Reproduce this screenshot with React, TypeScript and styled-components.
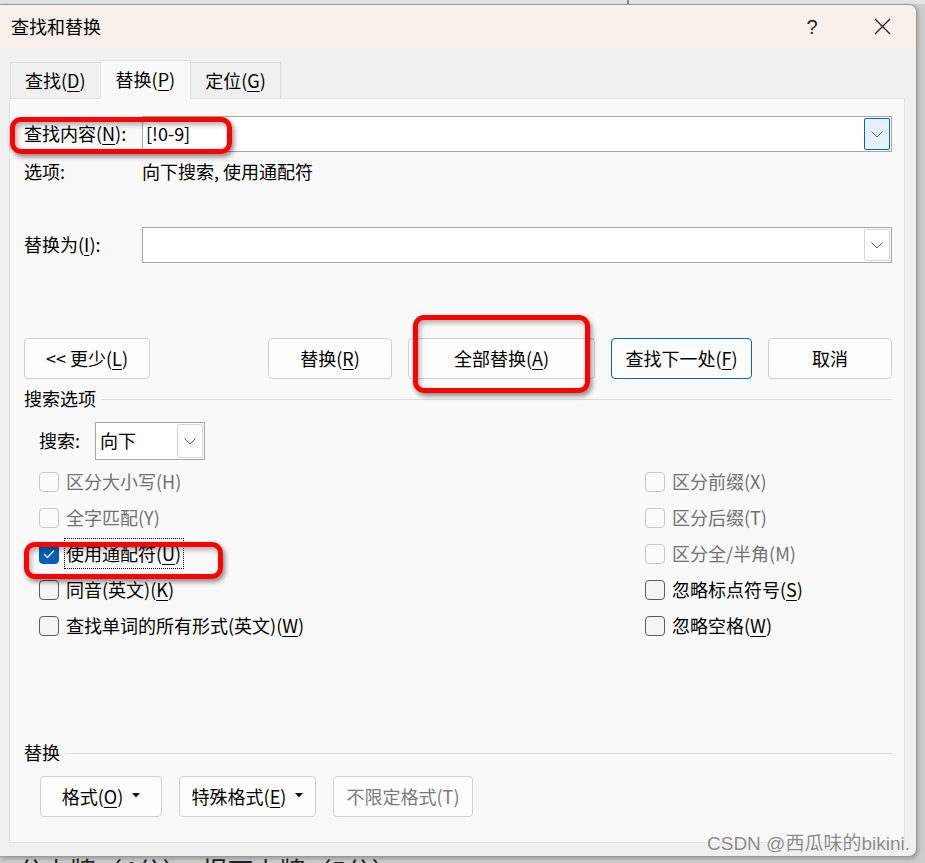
import React from "react";
import styled, { createGlobalStyle } from "styled-components";

const FONT = `"Noto Sans CJK SC", "Noto Sans", sans-serif`;

const Global = createGlobalStyle`
  html, body { margin: 0; padding: 0; }
  body { background: #cfcfcf; font-family: ${FONT}; color: #000; }
  u { text-underline-offset: 3px; text-decoration-thickness: 1px; }
`;

const Page = styled.div`
  position: relative;
  width: 925px;
  height: 863px;
  overflow: hidden;
  background: #cdcdcd;
`;

const TopStrip = styled.div`
  height: 4px;
  background: linear-gradient(to right, #e4e4e4 627px, #8c8c8c 627px, #8c8c8c 629px, #e4e4e4 629px);
`;

const Dialog = styled.div`
  position: relative;
  z-index: 1;
  width: 917px;
  height: 853px;
  box-sizing: border-box;
  border: 1px solid #999;
  border-left: none;
  border-radius: 0 8px 8px 0;
  background: #f0f0f0;
  display: flex;
  flex-direction: column;
  overflow: hidden;
  box-shadow: 1px 2px 4px rgba(0, 0, 0, 0.25);
`;

const TitleBar = styled.div`
  height: 43px;
  flex: none;
  background: #f9f0eb;
  display: flex;
  align-items: center;
  padding: 0 11px;
  font-size: 18px;
  line-height: 22px;
`;

const Title = styled.div`
  flex: 1;
  padding-bottom: 1px;
`;

const TitleButton = styled.div`
  width: 46px;
  height: 30px;
  display: flex;
  align-items: center;
  justify-content: center;
  font-family: "Liberation Sans", sans-serif;
  font-size: 20px;
  color: #222;
`;

const TitleButtons = styled.div`
  display: flex;
  gap: 24px;
`;

const Body = styled.div`
  flex: 1;
  display: flex;
  flex-direction: column;
  padding: 0 11px 0 9px;
`;

const TabStrip = styled.div`
  display: flex;
  align-items: flex-end;
  height: 50px;
  padding-left: 1px;
  position: relative;
  z-index: 1;
`;

const Tab = styled.div<{ $active?: boolean }>`
  box-sizing: border-box;
  height: ${(p) => (p.$active ? 39 : 37)}px;
  margin-bottom: -1px;
  padding: 0 ${(p) => (p.$active ? 15 : 14)}px 2px;
  display: flex;
  align-items: center;
  font-size: 18px;
  line-height: 22px;
  border: 1px solid ${(p) => (p.$active ? "#e3e3e3" : "#dddddd")};
  border-bottom: ${(p) => (p.$active ? "1px solid #f9f9f9" : "1px solid #e3e3e3")};
  background: ${(p) => (p.$active ? "#f9f9f9" : "#f0f0f0")};
  & + & {
    margin-left: -1px;
  }
`;

const Panel = styled.div`
  box-sizing: border-box;
  height: 745px;
  border: 1px solid #e3e3e3;
  background: #f9f9f9;
  padding: 17px 12px 0 14px;
  display: flex;
  flex-direction: column;
  font-size: 18px;
  line-height: 22px;
`;

const FieldRow = styled.div<{ $mt?: number }>`
  display: flex;
  align-items: center;
  height: 36px;
  margin-top: ${(p) => p.$mt ?? 0}px;
`;

const Label = styled.div`
  width: 118px;
  flex: none;
  padding-bottom: 2px;
`;

const Input = styled.div`
  flex: 1;
  height: 36px;
  box-sizing: border-box;
  border: 1px solid #a6a6a8;
  background: #fff;
  display: flex;
  align-items: center;
  padding-left: 3px;
`;

const InputText = styled.div`
  flex: 1;
  padding-bottom: 3px;
`;

const ComboButton = styled.div<{ $focused?: boolean; $h?: number }>`
  width: 26px;
  height: ${(p) => p.$h ?? 32}px;
  box-sizing: border-box;
  margin-right: 1px;
  border: 1px solid ${(p) => (p.$focused ? "#0067c0" : "#d6d6d6")};
  border-radius: 2px;
  background: ${(p) => (p.$focused ? "#e5f1fb" : "#fff")};
  display: flex;
  align-items: center;
  justify-content: center;
`;

const InfoRow = styled.div`
  display: flex;
  align-items: center;
  height: 40px;
`;

const ButtonRow = styled.div`
  display: flex;
  align-items: center;
  margin-top: 75px;
  gap: 16px;
`;

const Spacer = styled.div`
  flex: 1;
`;

const Button = styled.div<{ $w: number; $focused?: boolean; $disabled?: boolean }>`
  width: ${(p) => p.$w}px;
  height: 41px;
  box-sizing: border-box;
  border: 1px solid ${(p) => (p.$focused ? "#0067c0" : "#d0d0d0")};
  border-radius: 4px;
  background: #fdfdfd;
  display: flex;
  align-items: center;
  justify-content: center;
  gap: 9px;
  color: ${(p) => (p.$disabled ? "#7a7a7a" : "#000")};
  padding-bottom: 2px;
`;

const SectionHeading = styled.div<{ $mt: number }>`
  display: flex;
  align-items: center;
  gap: 5px;
  height: 22px;
  margin-top: ${(p) => p.$mt}px;
`;

const HeadingText = styled.span`
  padding-bottom: 2px;
`;

const Rule = styled.div`
  flex: 1;
  height: 1px;
  background: #dcdcdc;
`;

const SearchRow = styled.div`
  display: flex;
  align-items: center;
  margin-top: 12px;
  padding-left: 15px;
  gap: 15px;
`;

const Select = styled.div`
  width: 110px;
  height: 38px;
  box-sizing: border-box;
  border: 1px solid #a6a6a8;
  background: #fff;
  display: flex;
  align-items: center;
  padding-left: 4px;
`;

const CheckGrid = styled.div`
  display: grid;
  grid-template-columns: 606px 1fr;
  grid-auto-rows: 36px;
  margin-top: 4px;
  padding-left: 15px;
`;

const CheckItem = styled.div<{ $disabled?: boolean }>`
  display: flex;
  align-items: center;
  gap: 7px;
  color: ${(p) => (p.$disabled ? "#717171" : "#000")};
`;

const CheckText = styled.span`
  padding-bottom: 3px;
`;

const Box = styled.div<{ $checked?: boolean; $disabled?: boolean }>`
  width: 20px;
  height: 20px;
  box-sizing: border-box;
  border-radius: 4px;
  border: 1px solid
    ${(p) => (p.$checked ? "#005fb8" : p.$disabled ? "#c8c8c8" : "#5c5c5c")};
  background: ${(p) => (p.$checked ? "#005fb8" : p.$disabled ? "#fbfbfb" : "#f4f4f4")};
  display: flex;
  align-items: center;
  justify-content: center;
  flex: none;
`;

const FocusLabel = styled.span`
  outline: 1px dotted #000;
  outline-offset: 1px;
  padding: 0 1px 1px 0;
`;

const BottomButtons = styled.div`
  display: flex;
  align-items: center;
  gap: 17px;
  margin-top: 12px;
  padding-left: 16px;
`;

const DocLine = styled.div`
  margin-left: -8px;
  font-size: 26px;
  line-height: 26px;
  color: #222;
  white-space: nowrap;
`;

const Annotation = styled.div<{ $x: number; $y: number; $w: number; $h: number }>`
  position: absolute;
  z-index: 2;
  left: ${(p) => p.$x}px;
  top: ${(p) => p.$y}px;
  width: ${(p) => p.$w}px;
  height: ${(p) => p.$h}px;
  box-sizing: border-box;
  border: 5px solid #ff0000;
  border-radius: 11px;
  box-shadow: 2px 3px 5px rgba(0, 0, 0, 0.45), inset 2px 3px 5px rgba(0, 0, 0, 0.3);
  pointer-events: none;
`;

const Watermark = styled.div`
  position: absolute;
  z-index: 2;
  left: 707px;
  top: 832px;
  font-family: "Liberation Sans", "Noto Sans CJK SC", sans-serif;
  font-size: 19px;
  line-height: 24px;
  color: #8a8a8a;
  text-shadow: 0 0 2px #fff, 0 0 1px #fff;
  white-space: nowrap;
`;

const Chevron = () => (
  <svg width="12" height="7" viewBox="0 0 12 7">
    <polyline points="0.5,0.5 6,6 11.5,0.5" fill="none" stroke="#5f5f5f" strokeWidth="1" />
  </svg>
);

const Check = () => (
  <svg width="12" height="10" viewBox="0 0 12 10">
    <polyline points="1,5 4.5,8.5 11,1.5" fill="none" stroke="#fff" strokeWidth="1.3" />
  </svg>
);

const Caret = () => (
  <svg width="8" height="5" viewBox="0 0 8 5">
    <polygon points="0,0 8,0 4,4.5" fill="#111" />
  </svg>
);

const CloseIcon = () => (
  <svg width="17" height="17" viewBox="0 0 17 17">
    <path d="M1 1 L16 16 M16 1 L1 16" stroke="#1a1a1a" strokeWidth="1.3" fill="none" />
  </svg>
);

type Opt = { text: React.ReactNode; disabled?: boolean; checked?: boolean };

const options: Opt[] = [
  { text: "区分大小写(H)", disabled: true },
  { text: "区分前缀(X)", disabled: true },
  { text: "全字匹配(Y)", disabled: true },
  { text: "区分后缀(T)", disabled: true },
  { text: <FocusLabel>使用通配符(<u>U</u>)</FocusLabel>, checked: true },
  { text: "区分全/半角(M)", disabled: true },
  { text: <>同音(英文)(<u>K</u>)</> },
  { text: <>忽略标点符号(<u>S</u>)</> },
  { text: <>查找单词的所有形式(英文)(<u>W</u>)</> },
  { text: <>忽略空格(<u>W</u>)</> },
];

export default function App() {
  return (
    <Page>
      <Global />
      <TopStrip />
      <Dialog>
        <TitleBar>
          <Title>查找和替换</Title>
          <TitleButtons>
            <TitleButton>?</TitleButton>
            <TitleButton>
              <CloseIcon />
            </TitleButton>
          </TitleButtons>
        </TitleBar>
        <Body>
          <TabStrip>
            <Tab>
              查找(<u>D</u>)
            </Tab>
            <Tab $active>
              替换(<u>P</u>)
            </Tab>
            <Tab>
              定位(<u>G</u>)
            </Tab>
          </TabStrip>
          <Panel>
            <FieldRow>
              <Label>
                查找内容(<u>N</u>):
              </Label>
              <Input>
                <InputText>[!0-9]</InputText>
                <ComboButton $focused>
                  <Chevron />
                </ComboButton>
              </Input>
            </FieldRow>
            <InfoRow>
              <Label>选项:</Label>
              <HeadingText>向下搜索, 使用通配符</HeadingText>
            </InfoRow>
            <FieldRow $mt={35}>
              <Label>
                替换为(<u>I</u>):
              </Label>
              <Input>
                <InputText />
                <ComboButton>
                  <Chevron />
                </ComboButton>
              </Input>
            </FieldRow>
            <ButtonRow>
              <Button $w={126}>
                <span>
                  &lt;&lt; 更少(<u>L</u>)
                </span>
              </Button>
              <Spacer />
              <Button $w={124}>
                <span>
                  替换(<u>R</u>)
                </span>
              </Button>
              <Button $w={187}>
                <span>
                  全部替换(<u>A</u>)
                </span>
              </Button>
              <Button $w={141} $focused>
                <span>
                  查找下一处(<u>F</u>)
                </span>
              </Button>
              <Button $w={124}>
                <span>取消</span>
              </Button>
            </ButtonRow>
            <SectionHeading $mt={9}>
              <HeadingText>搜索选项</HeadingText>
              <Rule />
            </SectionHeading>
            <SearchRow>
              <HeadingText>搜索:</HeadingText>
              <Select>
                <InputText>向下</InputText>
                <ComboButton $h={34}>
                  <Chevron />
                </ComboButton>
              </Select>
            </SearchRow>
            <CheckGrid>
              {options.map((o, i) => (
                <CheckItem key={i} $disabled={o.disabled}>
                  <Box $checked={o.checked} $disabled={o.disabled}>
                    {o.checked && <Check />}
                  </Box>
                  <CheckText>{o.text}</CheckText>
                </CheckItem>
              ))}
            </CheckGrid>
            <SectionHeading $mt={98}>
              <HeadingText>替换</HeadingText>
              <Rule />
            </SectionHeading>
            <BottomButtons>
              <Button $w={122}>
                <span>
                  格式(<u>O</u>)
                </span>
                <Caret />
              </Button>
              <Button $w={137}>
                <span>
                  特殊格式(<u>E</u>)
                </span>
                <Caret />
              </Button>
              <Button $w={140} $disabled>
                <span>不限定格式(T)</span>
              </Button>
            </BottomButtons>
          </Panel>
        </Body>
      </Dialog>
      <DocLine>）分上牌（4分），报不上牌（5分）&lt;</DocLine>
      <Annotation $x={10} $y={117} $w={222} $h={37} />
      <Annotation $x={413} $y={315} $w={177} $h={78} />
      <Annotation $x={24} $y={542} $w={199} $h={37} />
      <Watermark>CSDN @西瓜味的bikini.</Watermark>
    </Page>
  );
}
